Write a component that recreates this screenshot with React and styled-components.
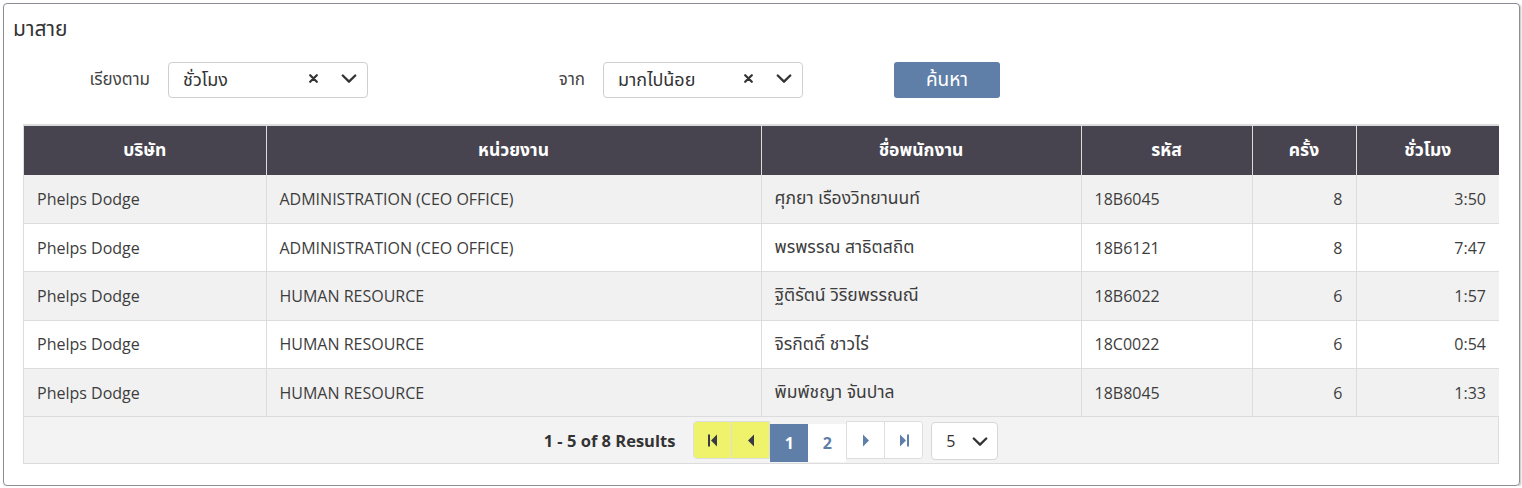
import styled, { createGlobalStyle } from 'styled-components';

const GlobalStyle = createGlobalStyle`
    body {
        margin: 0;
        background: #ffffff;
        font-family: "Open Sans", "Noto Sans", "Noto Sans Thai", sans-serif;
        color: #333333;
    }
`;

const rows = [
    { company: 'Phelps Dodge', dept: 'ADMINISTRATION (CEO OFFICE)', name: 'ศุภยา เรืองวิทยานนท์', code: '18B6045', times: 8, hours: '3:50' },
    { company: 'Phelps Dodge', dept: 'ADMINISTRATION (CEO OFFICE)', name: 'พรพรรณ สาธิตสถิต', code: '18B6121', times: 8, hours: '7:47' },
    { company: 'Phelps Dodge', dept: 'HUMAN RESOURCE', name: 'ฐิติรัตน์ วิริยพรรณณี', code: '18B6022', times: 6, hours: '1:57' },
    { company: 'Phelps Dodge', dept: 'HUMAN RESOURCE', name: 'จิรกิตติ์ ชาวไร่', code: '18C0022', times: 6, hours: '0:54' },
    { company: 'Phelps Dodge', dept: 'HUMAN RESOURCE', name: 'พิมพ์ชญา จันปาล', code: '18B8045', times: 6, hours: '1:33' },
];

const columns = [
    { title: 'บริษัท', width: 242, key: 'company' },
    { title: 'หน่วยงาน', width: 495, key: 'dept' },
    { title: 'ชื่อพนักงาน', width: 320, key: 'name', thai: true },
    { title: 'รหัส', width: 171, key: 'code' },
    { title: 'ครั้ง', width: 104, key: 'times', right: true },
    { title: 'ชั่วโมง', width: 143, key: 'hours', right: true },
];

const Chevron = ({ size = 16 }) => (
    <svg width={size} height={size * 0.6} viewBox="0 0 16 10">
        <path d="M1.5 1.5 L8 8 L14.5 1.5" fill="none" stroke="#333" strokeWidth="2.4" strokeLinecap="round" strokeLinejoin="round" />
    </svg>
);

const Cross = () => (
    <svg width="9" height="9" viewBox="0 0 9 9">
        <path d="M1.2 1.2 L7.8 7.8 M7.8 1.2 L1.2 7.8" stroke="#333" strokeWidth="2.2" strokeLinecap="round" />
    </svg>
);

const Tri = ({ dir, bar, color }) => (
    <svg width="10" height="13" viewBox="0 0 10 13">
        {dir === 'left' ? (
            <>
                {bar && <rect x="0" y="0.5" width="2" height="12" fill={color} />}
                <path d={bar ? 'M9 0.5 L3 6.5 L9 12.5 Z' : 'M8 0.5 L2 6.5 L8 12.5 Z'} fill={color} />
            </>
        ) : (
            <>
                <path d={bar ? 'M1 0.5 L7 6.5 L1 12.5 Z' : 'M2 0.5 L8 6.5 L2 12.5 Z'} fill={color} />
                {bar && <rect x="8" y="0.5" width="2" height="12" fill={color} />}
            </>
        )}
    </svg>
);

const App = () => {
    return (
        <>
            <GlobalStyle />
            <Card>
                <Title>มาสาย</Title>

                <FilterRow>
                    <Label $width={145}>เรียงตาม</Label>
                    <Select>
                        <span>ชั่วโมง</span>
                        <SelectIcons>
                            <Cross />
                            <Chevron />
                        </SelectIcons>
                    </Select>
                    <Label $width={235}>จาก</Label>
                    <Select>
                        <span>มากไปน้อย</span>
                        <SelectIcons>
                            <Cross />
                            <Chevron />
                        </SelectIcons>
                    </Select>
                    <SearchButton>ค้นหา</SearchButton>
                </FilterRow>

                <TableWrap>
                    <Table>
                        <colgroup>
                            {columns.map(c => <col key={c.key} style={{ width: c.width }} />)}
                        </colgroup>
                        <thead>
                            <tr>
                                {columns.map(c => <Th key={c.key}>{c.title}</Th>)}
                            </tr>
                        </thead>
                        <tbody>
                            {rows.map((r, i) => (
                                <Tr key={r.code} $odd={i % 2 === 0}>
                                    {columns.map(c => (
                                        <Td key={c.key} $right={c.right} $thai={c.thai}>{r[c.key]}</Td>
                                    ))}
                                </Tr>
                            ))}
                        </tbody>
                    </Table>

                    <Footer>
                        <Results>1 - 5 of 8 Results</Results>
                        <Pager>
                            <NavGroup $left>
                                <NavButton $yellow><Tri dir="left" bar color="#3b3946" /></NavButton>
                                <NavButton $yellow><Tri dir="left" color="#3b3946" /></NavButton>
                            </NavGroup>
                            <PageButton $active>1</PageButton>
                            <PageButton>2</PageButton>
                            <NavGroup>
                                <NavButton><Tri dir="right" color="#5f7fa8" /></NavButton>
                                <NavButton><Tri dir="right" bar color="#5f7fa8" /></NavButton>
                            </NavGroup>
                        </Pager>
                        <SizeSelect>
                            <span>5</span>
                            <Chevron />
                        </SizeSelect>
                    </Footer>
                </TableWrap>
            </Card>
        </>
    );
};

export default App;

const Card = styled.div`
    margin: 3px 0 0 3px;
    width: 1517px;
    height: 483px;
    box-sizing: border-box;
    border: 1px solid #8e8d96;
    border-radius: 4px;
    box-shadow: 1px 1px 2px rgba(0, 0, 0, 0.25);
    padding: 12px 19px 0 19px;
`;

const Title = styled.div`
    font-size: 21px;
    color: #333;
    margin-left: -10px;
    line-height: 24px;
`;

const FilterRow = styled.div`
    display: flex;
    align-items: center;
    margin-top: 22px;
    height: 36px;
`;

const Label = styled.div`
    width: ${p => p.$width}px;
    box-sizing: border-box;
    padding-right: 18px;
    text-align: right;
    font-size: 17px;
    color: #444;
`;

const Select = styled.div`
    width: 200px;
    height: 36px;
    box-sizing: border-box;
    border: 1px solid #cfcfcf;
    border-radius: 4px;
    display: flex;
    align-items: center;
    justify-content: space-between;
    padding: 0 10px 0 14px;
    font-size: 18px;
    color: #333;
`;

const SelectIcons = styled.div`
    display: flex;
    align-items: center;
    gap: 23px;
    margin-top: -3px;
`;

const SearchButton = styled.button`
    margin-left: 91px;
    width: 106px;
    height: 36px;
    border: none;
    border-radius: 3px;
    background: #5f7fa8;
    color: #ffffff;
    font-family: inherit;
    font-size: 19px;
`;

const TableWrap = styled.div`
    margin-top: 26px;
    width: 1476px;
    border: 1px solid #dcdcdc;
    border-top-width: 2px;
    box-sizing: border-box;
`;

const Table = styled.table`
    width: 100%;
    border-collapse: collapse;
    table-layout: fixed;
`;

const Th = styled.th`
    height: 49px;
    padding: 0;
    background: #47444f;
    color: #ffffff;
    font-size: 17.5px;
    font-weight: 700;
    text-align: center;
    border-left: 1px solid #dcdcdc;
    &:first-child { border-left: none; }
`;

const Tr = styled.tr`
    background: ${p => (p.$odd ? '#f1f1f1' : '#ffffff')};
`;

const Td = styled.td`
    height: 48.4px;
    box-sizing: border-box;
    padding: 0 13px;
    font-size: ${p => (p.$thai ? '17.5px' : '16px')};
    color: #3d3d3d;
    text-align: ${p => (p.$right ? 'right' : 'left')};
    border-left: 1px solid #dcdcdc;
    border-bottom: 1px solid #dcdcdc;
    &:first-child { border-left: none; }
`;

const Footer = styled.div`
    height: 46px;
    background: #f3f3f3;
    display: flex;
    align-items: center;
    justify-content: center;
    padding-left: 20px;
`;

const Results = styled.div`
    font-size: 16.5px;
    font-weight: 700;
    color: #333;
    margin-right: 18px;
`;

const Pager = styled.div`
    display: flex;
    align-items: flex-start;
    height: 40px;
    margin-top: 2px;
`;

const NavGroup = styled.div`
    display: flex;
    border: 1px solid #dedede;
    border-radius: ${p => (p.$left ? '4px 0 0 4px' : '0 4px 4px 0')};
    overflow: hidden;
`;

const NavButton = styled.div`
    width: 37px;
    height: 36px;
    display: flex;
    align-items: center;
    justify-content: center;
    background: ${p => (p.$yellow ? '#eef36b' : '#ffffff')};
    & + & { border-left: 1px solid ${p => (p.$yellow ? '#dfe46a' : '#dedede')}; }
`;

const PageButton = styled.div`
    width: 38px;
    height: 38px;
    margin-top: 3px;
    display: flex;
    align-items: center;
    justify-content: center;
    font-size: 16px;
    font-weight: 700;
    background: ${p => (p.$active ? '#5f7fa8' : '#ffffff')};
    color: ${p => (p.$active ? '#ffffff' : '#5f7fa8')};
`;

const SizeSelect = styled.div`
    margin-left: 8px;
    margin-top: 2px;
    width: 67px;
    height: 38px;
    box-sizing: border-box;
    border: 1px solid #d6d6d6;
    border-radius: 4px;
    background: #ffffff;
    display: flex;
    align-items: center;
    justify-content: space-between;
    padding: 0 9px 0 14px;
    font-size: 16px;
    color: #333;
`;
